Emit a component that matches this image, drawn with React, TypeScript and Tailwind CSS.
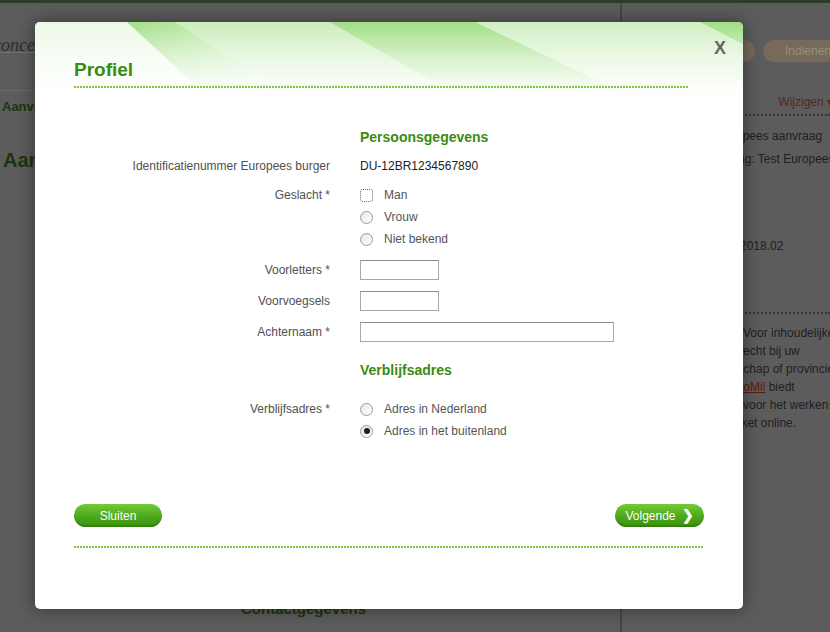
import React from "react";

const labelCls = "w-[256px] shrink-0 text-right text-[#505050]";

function Radio({ checked, focused }: { checked?: boolean; focused?: boolean }) {
  if (focused) {
    return <span className="block h-[13px] w-[13px] rounded-[3px] border border-dotted border-[#666]" />;
  }
  return (
    <span className="flex h-[13px] w-[13px] items-center justify-center rounded-full border border-[#9a9a9a] bg-gradient-to-br from-[#e6e6e6] to-white">
      {checked && <span className="block h-[6px] w-[6px] rounded-full bg-[#1e1e1e]" />}
    </span>
  );
}

function Option({ label, checked, focused }: { label: string; checked?: boolean; focused?: boolean }) {
  return (
    <div className="flex h-[22px] items-center gap-[11px] text-[#555]">
      <Radio checked={checked} focused={focused} />
      <span>{label}</span>
    </div>
  );
}

function Dots() {
  return <div className="h-[2px] bg-[repeating-linear-gradient(90deg,#84c243_0_2px,transparent_2px_3px)]" />;
}

function HeaderArt() {
  return (
    <svg className="absolute left-0 top-0" width="708" height="72" viewBox="0 0 708 72">
      <defs>
        <linearGradient id="hg" x1="0" y1="0" x2="0" y2="1">
          <stop offset="0" stopColor="#a2de86" />
          <stop offset="0.5" stopColor="#d8f2cc" />
          <stop offset="1" stopColor="#ffffff" />
        </linearGradient>
        <linearGradient id="band" x1="0" y1="0" x2="1" y2="0">
          <stop offset="0" stopColor="#fff" stopOpacity="0" />
          <stop offset="1" stopColor="#fff" stopOpacity="0.6" />
        </linearGradient>
      </defs>
      <rect width="708" height="72" fill="url(#hg)" />
      <polygon points="0,0 92,0 170,72 0,72" fill="#fff" fillOpacity="0.8" />
      <polygon points="92,0 140,0 250,72 170,72" fill="url(#band)" />
      <polygon points="140,0 295,0 420,72 250,72" fill="#fff" fillOpacity="0.45" />
      <polygon points="440,0 665,0 708,22 708,72 590,72" fill="#fff" fillOpacity="0.5" />
    </svg>
  );
}

function Modal() {
  return (
    <div className="absolute left-[35px] top-[22px] h-[587px] w-[708px] overflow-hidden rounded-[5px] bg-white shadow-[0_0_18px_rgba(0,0,0,0.45)]">
      <HeaderArt />
      <button className="absolute right-[17px] top-[17px] text-[18px] font-bold leading-[18px] text-[#666]">X</button>

      <div className="relative flex flex-col px-[39px]">
        {/* title */}
        <div className="mt-[36px] w-[614px]">
          <h1 className="text-[19px] font-bold leading-[24px] text-[#3b8a12]">Profiel</h1>
          <div className="mt-[4px]">
            <Dots />
          </div>
        </div>

        {/* Persoonsgegevens */}
        <div className="mt-[40px] flex gap-[30px]">
          <div className="w-[256px] shrink-0" />
          <h2 className="text-[14px] font-bold leading-[18px] text-[#3b8a12]">Persoonsgegevens</h2>
        </div>

        <div className="mt-[11px] flex gap-[30px] leading-[18px]">
          <div className={labelCls}>Identificatienummer Europees burger</div>
          <div className="text-[#222]">DU-12BR1234567890</div>
        </div>

        <div className="mt-[9px] flex gap-[30px]">
          <div className={`${labelCls} leading-[22px]`}>Geslacht *</div>
          <div>
            <Option label="Man" focused />
            <Option label="Vrouw" />
            <Option label="Niet bekend" />
          </div>
        </div>

        <div className="mt-[10px] flex h-[20px] items-center gap-[30px]">
          <div className={labelCls}>Voorletters *</div>
          <input className="h-[20px] w-[79px] border border-[#a8a8a8] border-t-[#8c8c8c] bg-white" />
        </div>

        <div className="mt-[11px] flex h-[20px] items-center gap-[30px]">
          <div className={labelCls}>Voorvoegsels</div>
          <input className="h-[20px] w-[79px] border border-[#a8a8a8] border-t-[#8c8c8c] bg-white" />
        </div>

        <div className="mt-[11px] flex h-[20px] items-center gap-[30px]">
          <div className={labelCls}>Achternaam *</div>
          <input className="h-[20px] w-[254px] border border-[#a8a8a8] border-t-[#8c8c8c] bg-white" />
        </div>

        {/* Verblijfsadres */}
        <div className="mt-[19px] flex gap-[30px]">
          <div className="w-[256px] shrink-0" />
          <h2 className="text-[14px] font-bold leading-[18px] text-[#3b8a12]">Verblijfsadres</h2>
        </div>

        <div className="mt-[19px] flex gap-[30px]">
          <div className={`${labelCls} leading-[22px]`}>Verblijfsadres *</div>
          <div>
            <Option label="Adres in Nederland" />
            <Option label="Adres in het buitenland" checked />
          </div>
        </div>

        {/* footer */}
        <div className="mt-[62px] flex w-[630px] justify-between">
          <button className="h-[23px] w-[88px] rounded-full bg-gradient-to-b from-[#72cc38] via-[#4fab1d] to-[#39900c] text-[12px] text-white shadow-[inset_0_-2px_0_rgba(0,0,0,0.12)]">
            Sluiten
          </button>
          <button className="flex h-[23px] w-[89px] items-center justify-center gap-[6px] rounded-full bg-gradient-to-b from-[#72cc38] via-[#4fab1d] to-[#39900c] text-[12px] text-white shadow-[inset_0_-2px_0_rgba(0,0,0,0.12)]">
            <span>Volgende</span>
            <span className="text-[14px] font-bold">❯</span>
          </button>
        </div>
        <div className="mt-[19px] w-[630px]">
          <Dots />
        </div>
      </div>
    </div>
  );
}

export default function App() {
  return (
    <div className="relative h-[632px] w-[830px] overflow-hidden bg-[#5c5c5c] font-['Liberation_Sans',Arial,sans-serif] text-[12px]">
      <div className="h-[3px] bg-[#2d3a2c]" />
      <div className="flex h-[629px]">
        {/* main column, dimmed behind the dialog */}
        <main className="flex w-[622px] shrink-0 flex-col border-r-2 border-[#474747]">
          <div className="h-[50px] border-b border-[#747474] pt-[33px]">
            <span className="-ml-[7px] block font-['Liberation_Serif',serif] text-[18px] italic leading-[18px] text-[#2c2c2c]">
              concept
            </span>
          </div>
          <div className="h-[38px] border-b border-[#6c6c6c]" />
          <div className="pl-[2px] pt-[7px] text-[13px] font-bold leading-[18px] text-[#1b3510]">Aanvragen</div>
          <h1 className="mt-[32px] pl-[3px] text-[20px] font-bold leading-[24px] text-[#1b3510]">Aanvraag Europees burger</h1>
          <h2 className="mb-[14px] mt-auto pl-[241px] text-[15px] font-bold leading-[18px] text-[#1b3510]">Contactgegevens</h2>
        </main>

        {/* sidebar */}
        <aside className="min-w-0 flex-1 whitespace-nowrap text-[#1f1f1f]">
          <div className="flex gap-[8px] pl-[43px] pt-[37px]">
            <span className="h-[22px] w-[90px] shrink-0 rounded-full bg-[#776a5b]" />
            <span className="flex h-[22px] shrink-0 items-center rounded-full bg-[#776a5b] px-[22px] text-[#9a8d7c]">Indienen</span>
          </div>
          <div className="-mr-[3px] mt-[31px] text-right leading-[18px] text-[#55281a]">Wijzigen ▾</div>
          <div className="mt-[3px] border-t-2 border-dotted border-[#353535]" />
          <div className="mt-[9px] h-[23px] pl-[60px] leading-[23px]">Soort: Europees aanvraag</div>
          <div className="h-[23px] pl-[44px] leading-[23px]">Naam aanvraag: Test Europees burger</div>
          <div className="mt-[64px] h-[23px] pl-[78px] leading-[23px]">Versie: 2018.02</div>
          <div className="mt-[54px] border-t-2 border-dotted border-[#353535]" />
          <div className="mt-[10px] leading-[18px]">
            <div className="pl-[121px]">Voor inhoudelijke vragen</div>
            <div className="pl-[71px]">kunt u terecht bij uw</div>
            <div className="pl-[86px]">waterschap of provincie.</div>
            <div className="pl-[108px]">
              <span className="text-[#5e1a10] underline">InfoMil</span> biedt
            </div>
            <div className="pl-[65px]">informatie voor het werken</div>
            <div className="pl-[6px]">met het Omgevingsloket online.</div>
          </div>
        </aside>
      </div>

      <Modal />
    </div>
  );
}
